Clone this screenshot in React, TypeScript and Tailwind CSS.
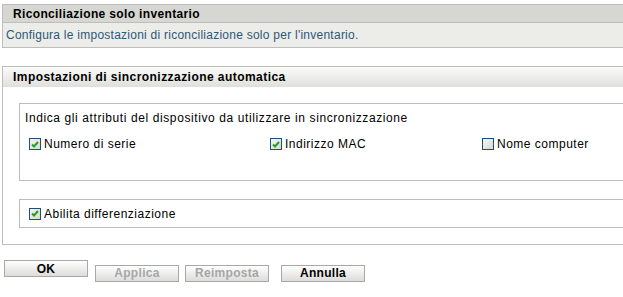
import React from "react";

const font = { fontFamily: '"Liberation Sans", Arial, sans-serif' };

// Small checkbox drawn like the old web-console style
function Check({ checked }: { checked: boolean }) {
  return (
    <span className="inline-flex items-center justify-center w-[12px] h-[12px] border border-[#1d4f7c] bg-gradient-to-br from-[#f4f4f2] to-[#d8d8d4] shrink-0">
      {checked && (
        <svg width="8" height="7" viewBox="0 0 8 7">
          <path d="M1 3.5 L3 5.5 L7 1" fill="none" stroke="#21a121" strokeWidth="2" />
        </svg>
      )}
    </span>
  );
}

function Option({ checked, label, className = "" }: { checked: boolean; label: string; className?: string }) {
  return (
    <label className={`flex items-center gap-[3px] text-[12px] tracking-[0.5px] text-black ${className}`}>
      <Check checked={checked} />
      <span>{label}</span>
    </label>
  );
}

function Btn({ label, disabled }: { label: string; disabled?: boolean }) {
  return (
    <button
      className={`w-[84px] h-[17px] border border-[#a8a8a8] bg-gradient-to-b from-white to-[#dcdcda] text-[12px] font-bold tracking-[0.3px] leading-none ${
        disabled ? "text-[#a6a6a6]" : "text-black"
      }`}
    >
      {label}
    </button>
  );
}

export default function App() {
  return (
    <div className="w-[623px] h-[297px] bg-white overflow-hidden" style={font}>
      {/* Top section */}
      <div className="mt-[4px] ml-[2px] border-t border-l border-b border-[#bdbdbd]">
        <div className="h-[18px] bg-[#d6d7d2] border-b border-[#bdbdbd] pl-[10px] flex items-center text-[12px] font-bold tracking-[0.35px] text-black">
          Riconciliazione solo inventario
        </div>
        <div className="h-[24px] bg-[#ecece9] pl-[3px] flex items-center text-[12px] tracking-[0.25px] text-[#2f5876]">
          Configura le impostazioni di riconciliazione solo per l'inventario.
        </div>
      </div>

      {/* Automatic sync section */}
      <div className="mt-[18px] ml-[2px] border-t border-l border-b border-[#bdbdbd] pb-[16px]">
        <div className="h-[20px] bg-gradient-to-b from-[#fbfbfa] to-[#dfe0dc] pl-[10px] flex items-center text-[12px] font-bold tracking-[0.45px] text-black">
          Impostazioni di sincronizzazione automatica
        </div>

        <div className="mt-[16px] ml-[16px] h-[78px] border-t border-l border-b border-[#bdbdbd] pl-[5px] pt-[7px]">
          <div className="text-[12px] tracking-[0.6px] text-black leading-[15px]">
            Indica gli attributi del dispositivo da utilizzare in sincronizzazione
          </div>
          <div className="flex mt-[9px] pl-[4px]">
            <Option checked label="Numero di serie" className="w-[241px]" />
            <Option checked label="Indirizzo MAC" className="w-[212px]" />
            <Option checked={false} label="Nome computer" />
          </div>
        </div>

        <div className="mt-[18px] ml-[16px] h-[29px] border-t border-l border-b border-[#bdbdbd] pl-[9px] flex items-center">
          <Option checked label="Abilita differenziazione" />
        </div>
      </div>

      {/* Buttons */}
      <div className="mt-[15px] ml-[4px] flex">
        <Btn label="OK" />
        <div className="ml-[7px]">
          <Btn label="Applica" disabled />
        </div>
        <div className="ml-[6px]">
          <Btn label="Reimposta" disabled />
        </div>
        <div className="ml-[12px]">
          <Btn label="Annulla" />
        </div>
      </div>
    </div>
  );
}
